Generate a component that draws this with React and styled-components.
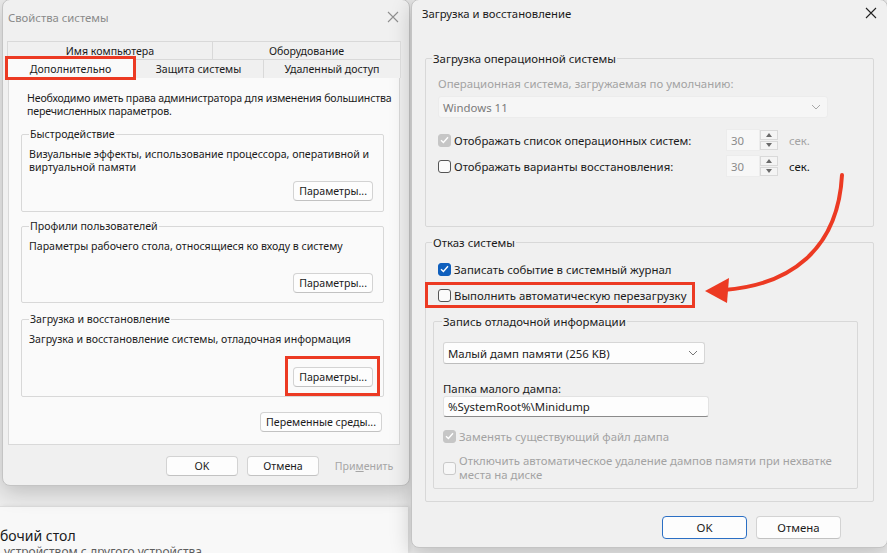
import React from 'react';
import styled, { createGlobalStyle } from 'styled-components';

const GlobalStyle = createGlobalStyle`
  html, body { margin: 0; padding: 0; }
  body {
    font-family: "Noto Sans", "Segoe UI", sans-serif;
    color: #1b1b1b;
    -webkit-font-smoothing: antialiased;
  }
  * { box-sizing: border-box; }
`;

const RED = '#ec3a23';

const Desktop = styled.div`
  position: relative;
  width: 887px;
  height: 553px;
  overflow: hidden;
  background: #ececec;
  display: flex;
  flex-direction: column;
  justify-content: flex-end;
`;

// settings page peeking out behind the dialogs
const SettingsCard = styled.div`
  width: 408px;
  height: 47px;
  background: #f8f8f8;
  border-top: 1px solid #dcdcdc;
  padding-top: 20px;
  box-shadow: 2px 0 4px rgba(0, 0, 0, 0.08);
  white-space: nowrap;
`;

const SettingsTitle = styled.div`
  font-size: 14px;
  line-height: 18px;
  color: #1a1a1a;
`;

const SettingsSub = styled.div`
  font-size: 12px;
  line-height: 14px;
  color: #5d5d5d;
  padding-left: 4px;
`;

const Window = styled.section`
  position: absolute;
  left: ${p => p.x}px;
  top: ${p => p.y}px;
  width: ${p => p.w}px;
  height: ${p => p.h}px;
  background: #f0f0f0;
  border: 1px solid #c4c4c4;
  border-radius: 8px;
  box-shadow: 0 6px 22px rgba(0, 0, 0, 0.2);
  display: flex;
  flex-direction: column;
  font-size: ${p => p.fs}px;
  white-space: nowrap;
`;

const TitleBar = styled.header`
  height: ${p => p.h}px;
  flex: none;
  display: flex;
  align-items: center;
  justify-content: space-between;
  padding: 0 ${p => p.pr}px 0 ${p => p.pl}px;
  font-size: 11.3px;
  color: ${p => (p.inactive ? '#8a8a8a' : '#1a1a1a')};
`;

const Close = ({ color }) => (
  <svg width="12" height="12" viewBox="0 0 12 12">
    <path d="M1 1 L11 11 M11 1 L1 11" stroke={color} strokeWidth="1.1" fill="none" />
  </svg>
);

/* ---------- left dialog ---------- */

const LeftBody = styled.div`
  flex: 1;
  display: flex;
  flex-direction: column;
  padding: 7px 9px 0 5px;
`;

const TabRow = styled.div`
  display: grid;
  grid-template-columns: ${p => p.cols};
  height: ${p => p.h}px;
  align-items: end;
`;

const Tab = styled.div`
  height: ${p => (p.active ? 'calc(100% + 1px)' : '100%')};
  display: flex;
  align-items: center;
  justify-content: center;
  border: 1px solid #d9d9d9;
  border-bottom: none;
  margin-left: -1px;
  background: ${p => (p.active ? '#fafafa' : '#f0f0f0')};
  position: relative;
  z-index: ${p => (p.active ? 2 : 1)};
  outline: ${p => (p.mark ? `3px solid ${RED}` : 'none')};
  outline-offset: -1px;
`;

const Panel = styled.div`
  height: 368px;
  background: #fafafa;
  border: 1px solid #d9d9d9;
  margin-top: -1px;
  padding: 14px 15px 0 12px;
  display: flex;
  flex-direction: column;
`;

const Text = styled.div`
  line-height: ${p => p.lh || 13}px;
  color: ${p => (p.muted ? '#a3a3a3' : 'inherit')};
  padding-left: ${p => p.indent || 0}px;
  margin-top: ${p => p.mt || 0}px;
  letter-spacing: ${p => p.ls || 0}px;
`;

const Group = styled.fieldset`
  margin: ${p => p.m || 0};
  padding: ${p => p.pad};
  border: 1px solid #d8d8d8;
  border-radius: 2px;
  display: flex;
  flex-direction: column;
  min-width: 0;
`;

const Legend = styled.legend`
  padding: 0 1px;
  margin-left: ${p => p.ml || 0}px;
  line-height: 13px;
`;

const Button = styled.button`
  font: inherit;
  height: ${p => p.h || 20}px;
  width: ${p => (p.w ? `${p.w}px` : 'auto')};
  padding: 0 5px;
  color: ${p => (p.disabled ? '#a6a6a6' : '#1b1b1b')};
  background: ${p => (p.disabled ? 'transparent' : '#fdfdfd')};
  border: 1px solid ${p => (p.primary ? '#2b6fc4' : p.disabled ? 'transparent' : '#d3d3d3')};
  border-bottom-color: ${p => (p.primary ? '#2b6fc4' : p.disabled ? 'transparent' : '#c2c2c2')};
  border-radius: 4px;
  align-self: ${p => p.align || 'auto'};
  margin: ${p => p.m || 0};
`;

// red annotation frame drawn around a control
const Mark = styled.div`
  border: 3px solid ${RED};
  align-self: ${p => p.align || 'auto'};
  width: ${p => (p.w ? `${p.w}px` : 'auto')};
  margin: ${p => p.m || 0};
  padding: ${p => p.pad || 0};
  display: flex;
`;

const Footer = styled.div`
  display: flex;
  justify-content: flex-end;
  gap: ${p => p.gap}px;
  margin-top: ${p => p.mt}px;
  padding-right: ${p => p.pr || 0}px;
`;

/* ---------- right dialog ---------- */

const RightBody = styled.div`
  flex: 1;
  display: flex;
  flex-direction: column;
  padding: 0 13px;
`;

const Select = styled.div`
  height: 22px;
  flex: none;
  width: ${p => p.w}px;
  display: flex;
  align-items: center;
  justify-content: space-between;
  padding: 0 6px 0 4px;
  background: ${p => (p.disabled ? '#f6f6f6' : '#fdfdfd')};
  border: 1px solid ${p => (p.disabled ? '#ececec' : '#d6d6d6')};
  border-bottom-color: ${p => (p.disabled ? '#ececec' : '#bdbdbd')};
  border-radius: 3px;
  color: ${p => (p.disabled ? '#7a7a7a' : '#1b1b1b')};
  margin-top: ${p => p.mt || 0}px;
`;

const Chevron = ({ color }) => (
  <svg width="10" height="6" viewBox="0 0 10 6">
    <path d="M1 1 L5 5 L9 1" stroke={color} strokeWidth="1" fill="none" />
  </svg>
);

const Input = styled.div`
  height: 21px;
  flex: none;
  width: ${p => p.w}px;
  display: flex;
  align-items: center;
  padding-left: 4px;
  background: #fdfdfd;
  border: 1px solid #e2e2e2;
  border-bottom: 1px solid #8a8a8a;
  border-radius: 3px;
  margin-top: ${p => p.mt || 0}px;
`;

const CheckRow = styled.div`
  display: ${p => (p.grid ? 'grid' : 'flex')};
  grid-template-columns: 288px 52px auto;
  align-items: center;
  gap: ${p => (p.grid ? 0 : 3)}px;
  min-height: ${p => p.h || 16}px;
  margin-top: ${p => p.mt || 0}px;
  color: ${p => (p.muted ? '#a3a3a3' : 'inherit')};
`;

const Label = styled.span`
  display: flex;
  align-items: center;
  gap: 3px;
`;

const Box = styled.span`
  width: 13px;
  height: 13px;
  flex: none;
  border-radius: 3px;
  display: inline-flex;
  align-items: center;
  justify-content: center;
  background: ${p =>
    p.state === 'on' ? '#0f5fbd' : p.state === 'offGrey' ? '#f7f7f7' : p.state === 'onGrey' ? '#c6c6c6' : '#fbfbfb'};
  border: 1px solid
    ${p =>
      p.state === 'on' ? '#0f5fbd' : p.state === 'onGrey' ? '#c6c6c6' : p.state === 'offGrey' ? '#c9c9c9' : '#555'};
`;

const Check = ({ state }) => (
  <Box state={state}>
    {(state === 'on' || state === 'onGrey') && (
      <svg width="9" height="8" viewBox="0 0 9 8">
        <path d="M1 4.2 L3.4 6.5 L8 1.2" stroke="#fff" strokeWidth="1.4" fill="none" />
      </svg>
    )}
  </Box>
);

const Spin = styled.div`
  display: flex;
  height: 22px;
`;

const SpinField = styled.div`
  width: 34px;
  display: flex;
  align-items: center;
  padding-left: 4px;
  background: #f7f7f7;
  border: 1px solid #ececec;
  color: #8a8a8a;
`;

const SpinArrows = styled.div`
  width: 18px;
  display: flex;
  flex-direction: column;
  gap: 1px;
  padding: 1px 0;
`;

const SpinBtn = styled.div`
  flex: 1;
  display: flex;
  align-items: center;
  justify-content: center;
  border: 1px solid #d9d9d9;
  background: #f4f4f4;
`;

const Tri = ({ up }) => (
  <svg width="6" height="4" viewBox="0 0 6 4">
    <path d={up ? 'M0 4 L3 0 L6 4 Z' : 'M0 0 L3 4 L6 0 Z'} fill="#6a6a6a" />
  </svg>
);

const Sec = styled.span`
  padding-left: 11px;
  color: ${p => (p.muted ? '#a3a3a3' : '#111')};
`;

const Arrow = styled.svg`
  position: absolute;
  left: 690px;
  top: 160px;
  pointer-events: none;
`;

const SpinBox = ({ value }) => (
  <Spin>
    <SpinField>{value}</SpinField>
    <SpinArrows>
      <SpinBtn><Tri up /></SpinBtn>
      <SpinBtn><Tri /></SpinBtn>
    </SpinArrows>
  </Spin>
);

export default function App() {
  return (
    <Desktop>
      <GlobalStyle />
      <SettingsCard>
        <SettingsTitle>бочий стол</SettingsTitle>
        <SettingsSub>устройством с другого устройства</SettingsSub>
      </SettingsCard>

      <Window x={2} y={-1} w={408} h={487} fs={10.6}>
        <TitleBar h={34} pl={5} pr={10} inactive>
          <span>Свойства системы</span>
          <Close color="#8f8f8f" />
        </TitleBar>
        <LeftBody>
          <TabRow cols="205px 188px" h={18}>
            <Tab>Имя компьютера</Tab>
            <Tab>Оборудование</Tab>
          </TabRow>
          <TabRow cols="126px 130px 137px" h={19}>
            <Tab active mark>Дополнительно</Tab>
            <Tab>Защита системы</Tab>
            <Tab>Удаленный доступ</Tab>
          </TabRow>
          <Panel>
            <Text indent={6} ls={-0.16}>
              Необходимо иметь права администратора для изменения большинства
              <br />
              перечисленных параметров.
            </Text>

            <Group m="10px 0 0" pad="7px 10px 10px 7px">
              <Legend>Быстродействие</Legend>
              <Text>
                Визуальные эффекты, использование процессора, оперативной и
                <br />
                виртуальной памяти
              </Text>
              <Button align="flex-end" m="7px 0 0">Параметры...</Button>
            </Group>

            <Group m="8px 0 0" pad="7px 10px 9px 7px">
              <Legend>Профили пользователей</Legend>
              <Text>Параметры рабочего стола, относящиеся ко входу в систему</Text>
              <Button align="flex-end" m="20px 0 0">Параметры...</Button>
            </Group>

            <Group m="10px 0 0" pad="7px 10px 0 7px">
              <Legend>Загрузка и восстановление</Legend>
              <Text>Загрузка и восстановление системы, отладочная информация</Text>
              <Mark align="flex-end" m="10px -7px 0 0" pad="8px 4px 6px 5px">
                <Button>Параметры...</Button>
              </Mark>
            </Group>

            <Button align="flex-end" m="15px 2px 0 0">Переменные среды...</Button>
          </Panel>
          <Footer gap={9} mt={11}>
            <Button w={72}>OK</Button>
            <Button w={72}>Отмена</Button>
            <Button w={72} disabled>
              При<u>м</u>енить
            </Button>
          </Footer>
        </LeftBody>
      </Window>

      <Window x={411} y={-1} w={477} h={549} fs={11.4}>
        <TitleBar h={26} pl={10} pr={10}>
          <span>Загрузка и восстановление</span>
          <Close color="#222" />
        </TitleBar>
        <RightBody>
          <Group m="26px 0 0" pad="12px 12px 49px 12px">
            <Legend ml={-6}>Загрузка операционной системы</Legend>
            <Text muted>Операционная система, загружаемая по умолчанию:</Text>
            <Select w={390} mt={6} disabled>
              <span>Windows 11</span>
              <Chevron color="#a8a8a8" />
            </Select>
            <CheckRow grid h={22} mt={11}>
              <Label>
                <Check state="onGrey" />
                Отображать список операционных систем:
              </Label>
              <SpinBox value="30" />
              <Sec muted>сек.</Sec>
            </CheckRow>
            <CheckRow grid h={22} mt={4}>
              <Label>
                <Check state="off" />
                Отображать варианты восстановления:
              </Label>
              <SpinBox value="30" />
              <Sec>сек.</Sec>
            </CheckRow>
          </Group>

          <Group m="9px 0 0" pad="12px 15px 12px 12px">
            <Legend ml={-6}>Отказ системы</Legend>
            <CheckRow>
              <Check state="on" />
              Записать событие в системный журнал
            </CheckRow>
            <Mark w={270} m="5px 0 0 -13px" pad="2px 0 2px 10px">
              <CheckRow>
                <Check state="off" />
                Выполнить автоматическую перезагрузку
              </CheckRow>
            </Mark>

            <Group m="7px 0 0 -5px" pad="14px 10px 6px 9px">
              <Legend ml={-1}>Запись отладочной информации</Legend>
              <Select w={262}>
                <span>Малый дамп памяти (256 KB)</span>
                <Chevron color="#777" />
              </Select>
              <Text mt={18}>Папка малого дампа:</Text>
              <Input w={266} mt={1}>%SystemRoot%\Minidump</Input>
              <CheckRow muted mt={11}>
                <Check state="onGrey" />
                Заменять существующий файл дампа
              </CheckRow>
              <CheckRow muted mt={10}>
                <Check state="offGrey" />
                <Text lh={14}>
                  Отключить автоматическое удаление дампов памяти при нехватке
                  <br />
                  места на диске
                </Text>
              </CheckRow>
            </Group>
          </Group>

          <Footer gap={9} mt={14} pr={33}>
            <Button w={85} h={23} primary>OK</Button>
            <Button w={85} h={23}>Отмена</Button>
          </Footer>
        </RightBody>
      </Window>

      <Arrow width="170" height="150" viewBox="0 0 170 150">
        <path d="M152 15 C 148 90, 100 125, 34 130" stroke={RED} strokeWidth="4" fill="none" strokeLinecap="round" />
        <path d="M15 131 L39 118 L37 143 Z" fill={RED} />
      </Arrow>
    </Desktop>
  );
}
